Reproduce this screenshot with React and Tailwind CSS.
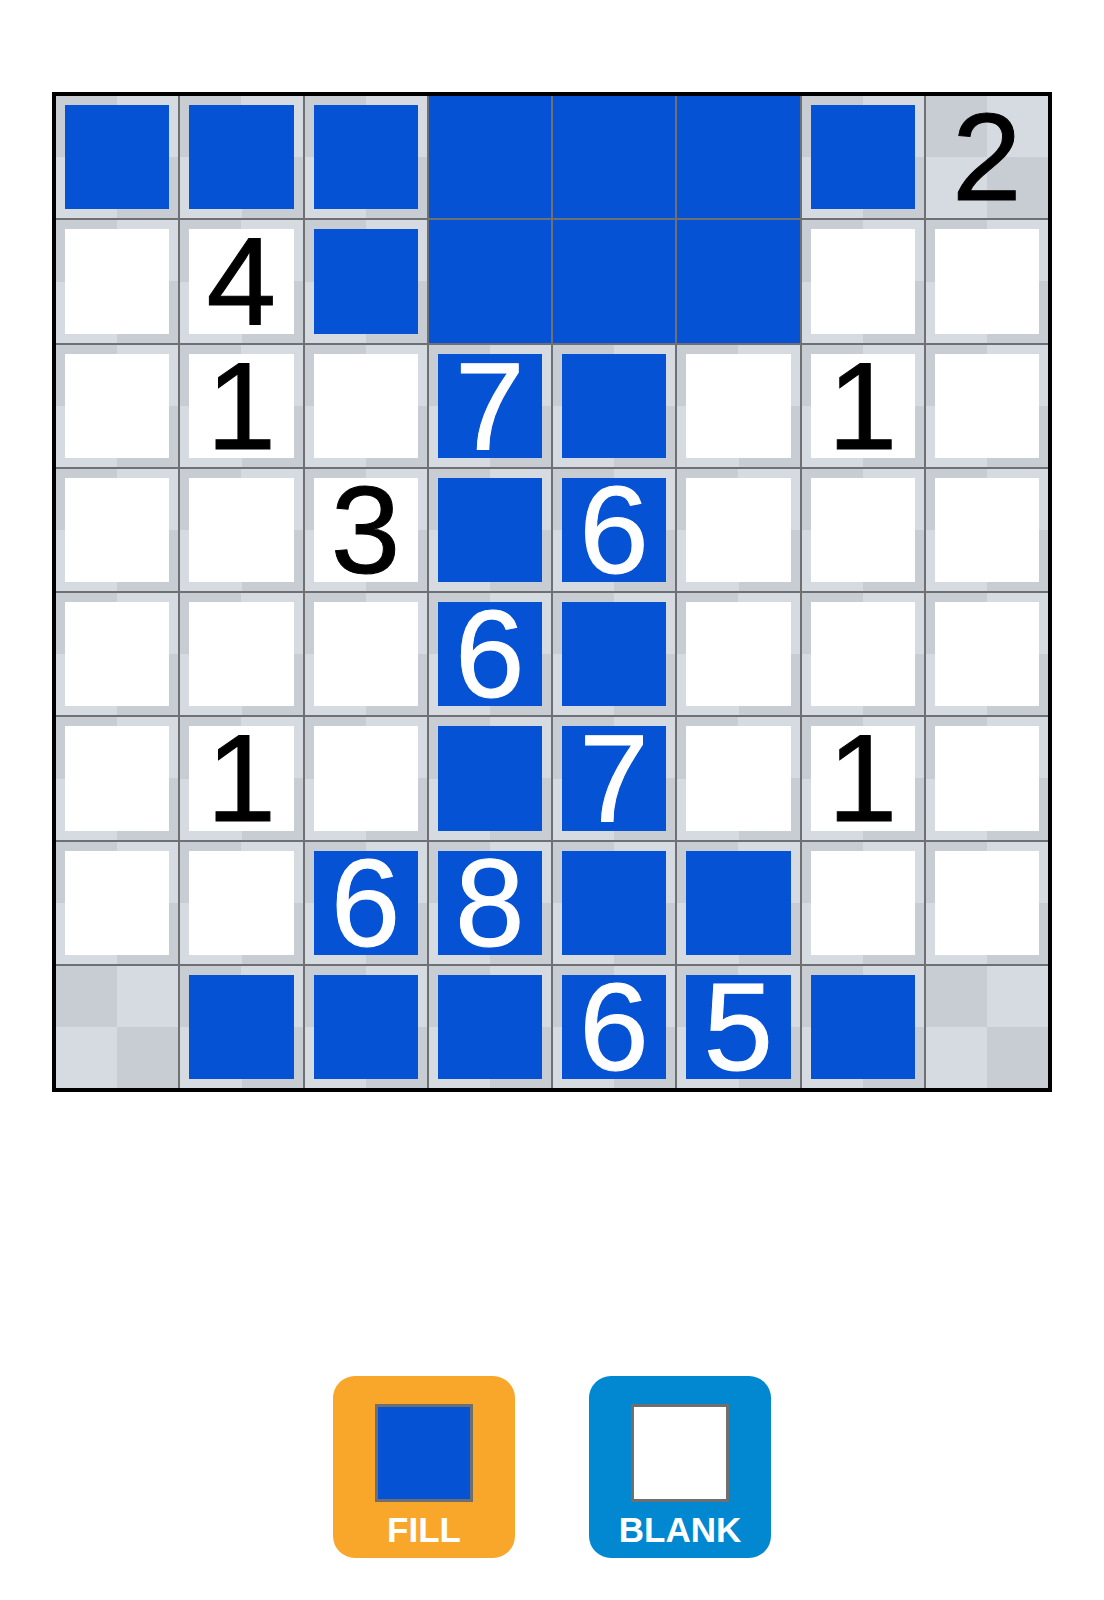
import React from 'react';

// F = filled (inset blue), S = solid blue, W = white, E = empty checker
// digits: "w4" black on white, "b7" white on blue, "e2" black on checker
const board = [
  ['F', 'F', 'F', 'S', 'S', 'S', 'F', 'e2'],
  ['W', 'w4', 'F', 'S', 'S', 'S', 'W', 'W'],
  ['W', 'w1', 'W', 'b7', 'F', 'W', 'w1', 'W'],
  ['W', 'W', 'w3', 'F', 'b6', 'W', 'W', 'W'],
  ['W', 'W', 'W', 'b6', 'F', 'W', 'W', 'W'],
  ['W', 'w1', 'W', 'F', 'b7', 'W', 'w1', 'W'],
  ['W', 'W', 'b6', 'b8', 'F', 'F', 'W', 'W'],
  ['E', 'F', 'F', 'F', 'b6', 'b5', 'F', 'E'],
];

const checker =
  'bg-[image:conic-gradient(#d6dae1_0_25%,#c8ccd3_0_50%,#d6dae1_0_75%,#c8ccd3_0)]';

function Digit({ value, light }) {
  return (
    <span
      className={`text-[125px] leading-[90px] font-['Liberation_Sans',Arial,sans-serif] ${
        light
          ? 'text-white [-webkit-text-stroke:1px_white]'
          : 'text-black [-webkit-text-stroke:1px_black]'
      }`}
    >
      {value}
    </span>
  );
}

function Cell({ kind }) {
  if (kind === 'S') {
    return <div className="bg-[#0652d5]" />;
  }
  if (kind === 'E') {
    return <div className={checker} />;
  }
  if (kind[0] === 'e') {
    return (
      <div className={`${checker} flex items-center justify-center`}>
        <Digit value={kind.slice(1)} />
      </div>
    );
  }
  const blue = kind === 'F' || kind[0] === 'b';
  const digit = kind.length > 1 ? kind.slice(1) : null;
  return (
    <div className={`${checker} p-[9px] flex`}>
      <div
        className={`flex-1 flex items-center justify-center ${
          blue ? 'bg-[#0652d5]' : 'bg-white'
        }`}
      >
        {digit && <Digit value={digit} light={blue} />}
      </div>
    </div>
  );
}

function ToolButton({ label, bg, swatch }) {
  return (
    <button
      className={`w-[182px] h-[182px] rounded-[22px] ${bg} flex flex-col items-center pt-[28px]`}
    >
      <div className={`w-[98px] h-[98px] border-[3px] border-[#6f6f6f] ${swatch}`} />
      <span className="mt-[10px] text-[35px] leading-none font-bold text-white font-['Liberation_Sans',Arial,sans-serif]">
        {label}
      </span>
    </button>
  );
}

export default function App() {
  return (
    <div className="w-[1104px] h-[1600px] bg-white flex flex-col items-center">
      <div className="mt-[92px] w-[1000px] h-[1000px] border-4 border-black bg-[#6e7074] grid grid-cols-8 grid-rows-8 gap-[2px]">
        {board.flat().map((kind, i) => (
          <Cell key={i} kind={kind} />
        ))}
      </div>

      <div className="mt-[284px] flex gap-[74px]">
        <ToolButton label="FILL" bg="bg-[#f9a72b]" swatch="bg-[#0652d5]" />
        <ToolButton label="BLANK" bg="bg-[#0288d1]" swatch="bg-white" />
      </div>
    </div>
  );
}
